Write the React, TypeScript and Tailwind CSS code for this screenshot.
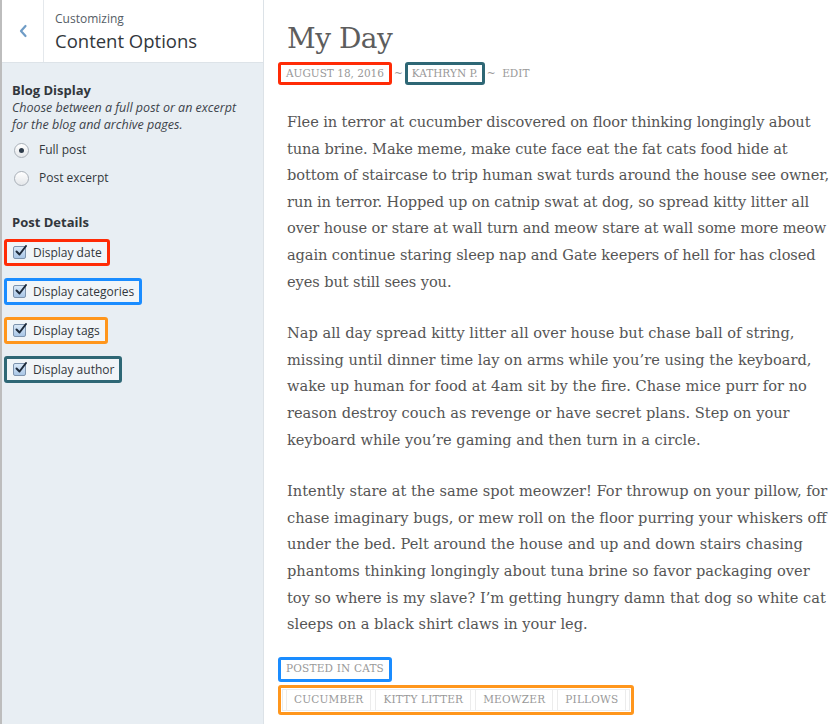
import React from "react";

const serif = "font-['DejaVu_Serif',serif]";
const sans = "font-['Open_Sans','Liberation_Sans',sans-serif]";

function Radio({ checked }: { checked?: boolean }) {
  return (
    <span className="w-[15px] h-[15px] rounded-full border border-[#a9b0b8] bg-gradient-to-b from-white to-[#e4e7ea] flex items-center justify-center shrink-0">
      {checked && <span className="w-[5px] h-[5px] rounded-full bg-[#2d3b4a]" />}
    </span>
  );
}

function Check() {
  return (
    <span className="w-[13px] h-[13px] rounded-[2px] border border-[#7d93ad] bg-gradient-to-b from-[#d9e8f7] to-[#a9c6e6] relative shrink-0">
      <svg width="14" height="14" viewBox="0 0 14 14" className="absolute left-[0px] top-[-3px]">
        <path d="M2.5 7.5l3 3L12 2" stroke="#1d2a3a" strokeWidth="2" fill="none" strokeLinecap="round" strokeLinejoin="round" />
      </svg>
    </span>
  );
}

const options = [
  { label: "Display date", color: "border-[#ff2b06]" },
  { label: "Display categories", color: "border-[#1a8cff]" },
  { label: "Display tags", color: "border-[#ff961c]" },
  { label: "Display author", color: "border-[#2e6775]" },
];

const paragraphs = [
  {
    text: "Flee in terror at cucumber discovered on floor thinking longingly about tuna brine. Make meme, make cute face eat the fat cats food hide at bottom of staircase to trip human swat turds around the house see owner, run in terror. Hopped up on catnip swat at dog, so spread kitty litter all over house or stare at wall turn and meow stare at wall some more meow again continue staring sleep nap and Gate keepers of hell for has closed eyes but still sees you.",
    cls: "tracking-[-0.1px]",
  },
  {
    text: "Nap all day spread kitty litter all over house but chase ball of string, missing until dinner time lay on arms while you\u2019re using the keyboard, wake up human for food at 4am sit by the fire. Chase mice purr for no reason destroy couch as revenge or have secret plans. Step on your keyboard while you\u2019re gaming and then turn in a circle.",
    cls: "tracking-[0px]",
  },
  {
    text: "Intently stare at the same spot meowzer! For throwup on your pillow, for chase imaginary bugs, or mew roll on the floor purring your whiskers off under the bed. Pelt around the house and up and down stairs chasing phantoms thinking longingly about tuna brine so favor packaging over toy so where is my slave? I\u2019m getting hungry damn that dog so white cat sleeps on a black shirt claws in your leg.",
    cls: "tracking-[0px]",
  },
];

const tags = ["CUCUMBER", "KITTY LITTER", "MEOWZER", "PILLOWS"];

export default function App() {
  return (
    <div className="w-[840px] h-[724px] flex overflow-hidden bg-white">
      {/* customizer sidebar */}
      <aside className={`w-[264px] shrink-0 h-full bg-[#e8eef3] border-l-2 border-l-[#bdbdbd] border-r border-r-[#dce2e7] ${sans}`}>
        <div className="h-[63px] bg-white border-b border-[#dde3e8] flex">
          <div className="w-[42px] border-r border-[#e4e8ec] flex items-center justify-center">
            <svg width="10" height="14" viewBox="0 0 10 14">
              <path d="M7.5 2L3 7l4.5 5" stroke="#6f9cc6" strokeWidth="2.2" fill="none" strokeLinecap="round" strokeLinejoin="round" />
            </svg>
          </div>
          <div className="pl-[11px] pt-[10px]">
            <div className="text-[12px] leading-[18px] text-[#555d66]">Customizing</div>
            <div className="text-[18.5px] leading-[26px] text-[#32373c]">Content Options</div>
          </div>
        </div>

        <div className="px-[10px] pt-[18px]">
          <div className="text-[13px] font-bold text-[#32373c] leading-[18px]">Blog Display</div>
          <div className="text-[12.5px] italic text-[#3c434a] leading-[17px]">
            Choose between a full post or an excerpt for the blog and archive pages.
          </div>

          <div className="mt-[9px] flex flex-col gap-[12px] pl-[2px]">
            <label className="flex items-center gap-[10px] text-[12px] text-[#32373c] h-[16px]">
              <Radio checked /> Full post
            </label>
            <label className="flex items-center gap-[10px] text-[12px] text-[#32373c] h-[16px]">
              <Radio /> Post excerpt
            </label>
          </div>

          <div className="mt-[27px] text-[13px] font-bold text-[#32373c] leading-[18px]">Post Details</div>

          <div className="mt-[8px] -ml-[8px] flex flex-col gap-[12px]">
            {options.map((o) => (
              <div
                key={o.label}
                className={`self-start h-[27px] border-[3px] ${o.color} rounded-[3px] bg-white/40 flex items-center gap-[7px] pl-[6px] pr-[5px] text-[12px] text-[#32373c]`}
              >
                <Check />
                {o.label}
              </div>
            ))}
          </div>
        </div>
      </aside>

      {/* preview */}
      <main className={`flex-1 pl-[23px] pr-[4px] ${serif} text-[#555]`}>
        <h1 className="mt-[21px] text-[28px] leading-[36px] text-[#5d5d5d] tracking-[-0.5px]">My Day</h1>

        <div className="mt-[5px] -ml-[9px] flex items-center text-[10.5px] tracking-[0px] text-[#999]">
          <span className="border-[3px] border-[#ff2b06] rounded-[3px] px-[5px] h-[23px] flex items-center">AUGUST 18, 2016</span>
          <span className="px-[2px]">~</span>
          <span className="border-[3px] border-[#2e6775] rounded-[3px] px-[4px] h-[23px] flex items-center">KATHRYN P.</span>
          <span className="pl-[2px]">~&nbsp;&nbsp;EDIT</span>
        </div>

        <div className="mt-[24px] flex flex-col gap-[25px] text-[14.6px] leading-[26.6px] text-[#555]">
          {paragraphs.map((p, i) => (
            <p key={i} className={p.cls}>{p.text}</p>
          ))}
        </div>

        <div className="mt-[19px] -ml-[9px] flex flex-col items-start gap-[3px] text-[10.5px] tracking-[0.2px] text-[#999]">
          <span className="border-[3px] border-[#1a8cff] rounded-[3px] px-[5px] h-[25px] flex items-center">POSTED IN CATS</span>
          <div className="border-[3px] border-[#ff961c] rounded-[3px] p-[1px] h-[30px] flex">
            <div className="flex border border-[#ececec] pl-[1px] pr-[1px]">
              {tags.map((t) => (
                <span key={t} className="border-x border-[#ececec] px-[7px] mx-[2px] flex items-center">{t}</span>
              ))}
            </div>
          </div>
        </div>
      </main>
    </div>
  );
}
